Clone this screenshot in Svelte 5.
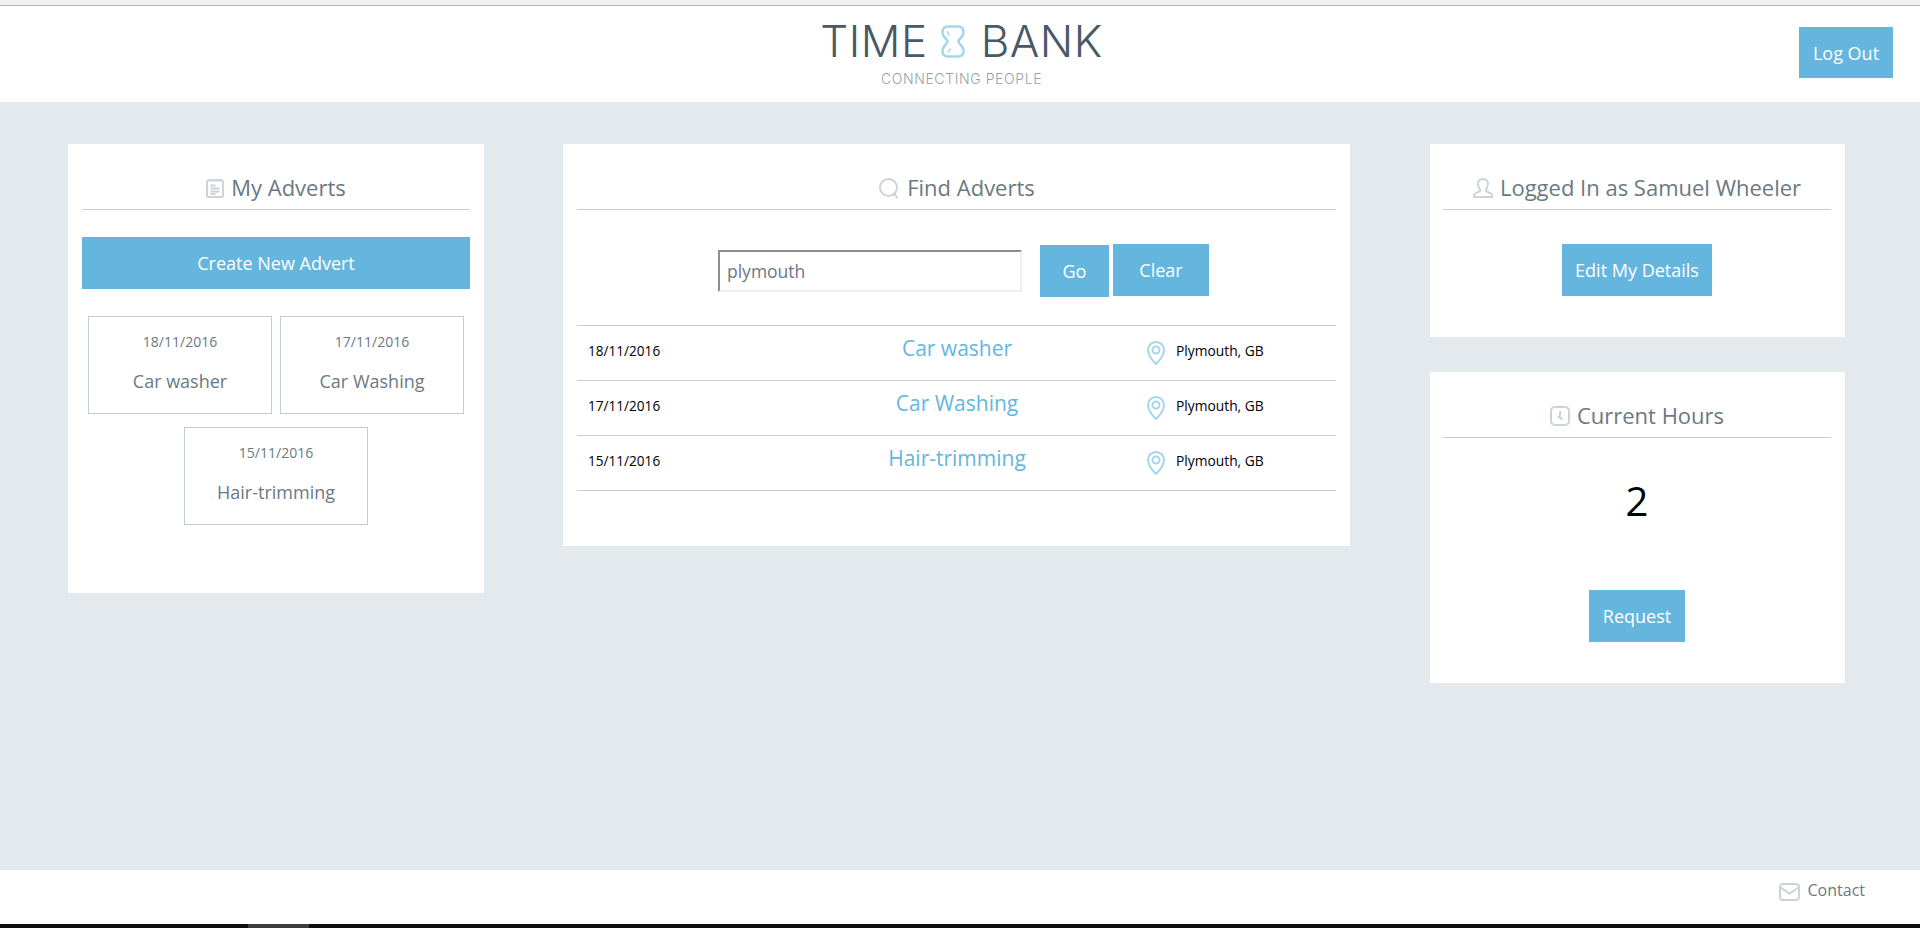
<script lang="ts">
  const adverts = [
    { date: '18/11/2016', title: 'Car washer', place: 'Plymouth, GB' },
    { date: '17/11/2016', title: 'Car Washing', place: 'Plymouth, GB' },
    { date: '15/11/2016', title: 'Hair-trimming', place: 'Plymouth, GB' },
  ]
</script>

<div class="page">
  <div class="top-strip"></div>

  <header class="header">
    <div class="logo">
      <div class="logo-main">
        <span>TIME</span>
        <svg class="glass" viewBox="0 0 24 33" width="24" height="33" aria-hidden="true">
          <path d="M7 1.500h10c3.500 0 5.500 1.500 5.500 5.500 0 6-5 6.500-5 9.500s5 3.500 5 9.500c0 4-2 5.500-5.500 5.500H7c-3.500 0-5.500-1.500-5.500-5.500 0-6 5-6.500 5-9.500S1.500 13 1.500 7c0-4 2-5.500 5.500-5.500z" />
          <path class="shine" d="M6.500 6c.3 2 1 3.500 2 4.500M7 27.500c.5-1.500 1.500-3 3-3.500" />
        </svg>
        <span>BANK</span>
      </div>
      <div class="logo-sub">CONNECTING PEOPLE</div>
    </div>
    <button class="btn logout">Log Out</button>
  </header>

  <main class="main">
    <section class="card left">
      <h2 class="title">
        <svg class="ico" viewBox="0 0 18 20" width="18" height="20" aria-hidden="true">
          <rect x="1" y="2.500" width="16" height="16.500" rx="1.500" />
          <path d="M3 1v2M5.500 1v2M8 1v2M10.500 1v2M13 1v2M15 1v2M4.500 7.500h5M4.500 10.500h9M4.500 13.500h9M4.500 16h5" />
        </svg>
        My Adverts
      </h2>
      <button class="btn create">Create New Advert</button>
      <div class="tiles">
        {#each adverts as ad}
          <div class="tile">
            <div class="tile-date">{ad.date}</div>
            <div class="tile-name">{ad.title}</div>
          </div>
        {/each}
      </div>
    </section>

    <section class="card center">
      <h2 class="title">
        <svg class="ico" viewBox="0 0 22 22" width="22" height="22" aria-hidden="true">
          <circle cx="10.500" cy="10.500" r="8.500" />
          <path d="M16.500 17l3 4" />
        </svg>
        Find Adverts
      </h2>
      <div class="search">
        <input class="search-input" type="text" value="plymouth" />
        <button class="btn go">Go</button>
        <button class="btn clear">Clear</button>
      </div>
      <div class="results">
        {#each adverts as ad}
          <div class="row">
            <span class="row-date">{ad.date}</span>
            <a class="row-name" href="#top">{ad.title}</a>
            <span class="row-place">
              <svg class="pin" viewBox="0 0 18 24" width="18" height="24" aria-hidden="true">
                <path d="M9 1C4.500 1 1 4.500 1 9c0 5.500 5 11 8 14 3-3 8-8.500 8-14 0-4.500-3.500-8-8-8z" />
                <circle cx="9" cy="9" r="3.500" />
              </svg>
              {ad.place}
            </span>
          </div>
        {/each}
      </div>
    </section>

    <div class="side">
      <section class="card user">
        <h2 class="title">
          <svg class="ico" viewBox="0 0 20 20" width="20" height="20" aria-hidden="true">
            <path d="M1 19v-2c0-2 5-3 6-4 .5-1 0-2-1-3.500C5 8 5 6.500 5 5.500 5 3 7 1 10 1s5 2 5 4.500c0 1-.5 2.500-1 4-1 1.500-1.500 2.500-1 3.500 1 1 6 2 6 4v2z" />
          </svg>
          Logged In as Samuel Wheeler
        </h2>
        <button class="btn edit">Edit My Details</button>
      </section>

      <section class="card hours">
        <h2 class="title">
          <svg class="ico" viewBox="0 0 20 20" width="20" height="20" aria-hidden="true">
            <rect x="1" y="1" width="18" height="18" rx="4" />
            <path d="M10.500 5l-1 6 3 2.500M7.500 11h3" />
          </svg>
          Current Hours
        </h2>
        <div class="hours-value">2</div>
        <button class="btn request">Request</button>
      </section>
    </div>
  </main>

  <footer class="footer">
    <svg class="ico mail" viewBox="0 0 21 18" width="21" height="18" aria-hidden="true">
      <rect x="1" y="1" width="19" height="16" rx="3" />
      <path d="M1.500 4.500l9 6 9-6" />
    </svg>
    <span>Contact</span>
  </footer>
  <div class="taskbar"><span class="task"></span></div>
</div>

<style>
  :global(body) {
    margin: 0;
    background: #e4e9ed;
  }

  .page {
    height: 928px;
    display: flex;
    flex-direction: column;
    overflow: hidden;
    font-family: "Open Sans", "Liberation Sans", sans-serif;
    color: #6b7983;
  }

  .top-strip {
    height: 5px;
    flex: none;
    background: #f0f0f0;
    border-bottom: 1px solid #b4b4b4;
  }

  .header {
    height: 96px;
    flex: none;
    background: #fff;
    display: flex;
    justify-content: center;
    position: relative;
  }

  .logo {
    padding-top: 18px;
    margin-left: 3px;
    display: flex;
    flex-direction: column;
    align-items: center;
    font-family: "Inter", sans-serif;
    font-weight: 300;
  }

  .logo-main {
    display: flex;
    align-items: center;
    font-size: 44px;
    line-height: 34px;
    letter-spacing: 0.5px;
    color: #4a5966;
  }

  .glass {
    margin: 0 16px 0 13px;
    fill: none;
    stroke: #a5d6ef;
    stroke-width: 2.500;
  }

  .shine {
    stroke-width: 1.500;
  }

  .logo-sub {
    margin-top: 14px;
    font-size: 14px;
    line-height: 14px;
    letter-spacing: 0.6px;
    color: #99a1a7;
  }

  .btn {
    border: 0;
    padding: 0;
    background: #65b6de;
    color: #fff;
    font-family: inherit;
    font-size: 18px;
    height: 52px;
  }

  .logout {
    position: absolute;
    right: 27px;
    top: 21px;
    width: 94px;
    height: 51px;
  }

  .main {
    flex: 1;
    display: flex;
    align-items: flex-start;
    padding: 42px 75px 0 68px;
    gap: 79px;
  }

  .card {
    background: #fff;
    padding: 14px;
    box-sizing: border-box;
  }

  .left {
    width: 416px;
    height: 449px;
  }

  .center {
    width: 787px;
    height: 402px;
    flex: none;
    margin-right: 1px;
  }

  .side {
    width: 415px;
    flex: none;
    display: flex;
    flex-direction: column;
    gap: 35px;
  }

  .title {
    margin: 0;
    height: 52px;
    box-sizing: border-box;
    padding: 14px 0 7px;
    border-bottom: 1px solid #c9ced3;
    display: flex;
    justify-content: center;
    align-items: center;
    gap: 7px;
    font-size: 22px;
    font-weight: 400;
    line-height: 30px;
  }

  .ico {
    fill: none;
    stroke: #ccd3d9;
    stroke-width: 2;
    flex: none;
    margin-top: 2px;
  }

  .create {
    display: block;
    width: 100%;
    margin-top: 27px;
  }

  .tiles {
    display: flex;
    flex-wrap: wrap;
    justify-content: center;
    gap: 13px 8px;
    margin-top: 27px;
  }

  .tile {
    width: 184px;
    height: 98px;
    box-sizing: border-box;
    border: 1px solid #c4ccd3;
    text-align: center;
  }

  .tile-date {
    margin-top: 15px;
    font-size: 14px;
    line-height: 19px;
  }

  .tile-name {
    margin-top: 18px;
    font-size: 18px;
    line-height: 24px;
  }

  .search {
    display: flex;
    align-items: flex-start;
    height: 116px;
    box-sizing: border-box;
    padding: 34px 0 0 141px;
    border-bottom: 1px solid #c9ced3;
  }

  .search-input {
    width: 304px;
    height: 42px;
    margin: 6px 18px 0 0;
    padding: 0 7px;
    box-sizing: border-box;
    border-width: 2px;
    border-style: solid;
    border-color: #8e8e8e #eeeeee #eeeeee #8e8e8e;
    font-family: inherit;
    font-size: 17.500px;
    color: #6b7983;
    outline: none;
  }

  .go {
    width: 69px;
    margin: 1px 4px 0 0;
  }

  .clear {
    width: 96px;
  }

  .row {
    height: 55px;
    box-sizing: border-box;
    border-bottom: 1px solid #c9ced3;
    display: grid;
    grid-template-columns: 250px 238px 1fr;
    align-items: center;
    padding: 0 0 5px 11px;
    color: #000;
    font-size: 13.600px;
  }

  .row-name {
    justify-self: center;
    margin-top: -5px;
    font-size: 21px;
    color: #65b6de;
    text-decoration: none;
  }

  .row-place {
    display: flex;
    align-items: center;
    gap: 11px;
    margin-left: 71px;
    font-size: 13.800px;
  }

  .pin {
    margin-top: 5px;
    fill: none;
    stroke: #a5d6ef;
    stroke-width: 2;
  }

  .user {
    height: 193px;
    text-align: center;
    padding-left: 13px;
  }

  .edit {
    width: 150px;
    margin-top: 34px;
  }

  .hours {
    height: 311px;
    text-align: center;
    padding-left: 13px;
  }

  .hours-value {
    margin-top: 36px;
    font-size: 40px;
    line-height: 54px;
    color: #000;
  }

  .request {
    width: 96px;
    margin-top: 62px;
  }

  .footer {
    height: 54px;
    flex: none;
    background: #fff;
    display: flex;
    justify-content: flex-end;
    gap: 8px;
    padding: 8px 55px 0 0;
    box-sizing: border-box;
    font-size: 16px;
    line-height: 24px;
  }

  .mail {
    margin-top: 5px;
  }

  .taskbar {
    height: 4px;
    flex: none;
    background: #0e0e0e;
    padding-left: 248px;
  }

  .task {
    display: block;
    width: 61px;
    height: 4px;
    background: #3c3c3c;
  }
</style>
